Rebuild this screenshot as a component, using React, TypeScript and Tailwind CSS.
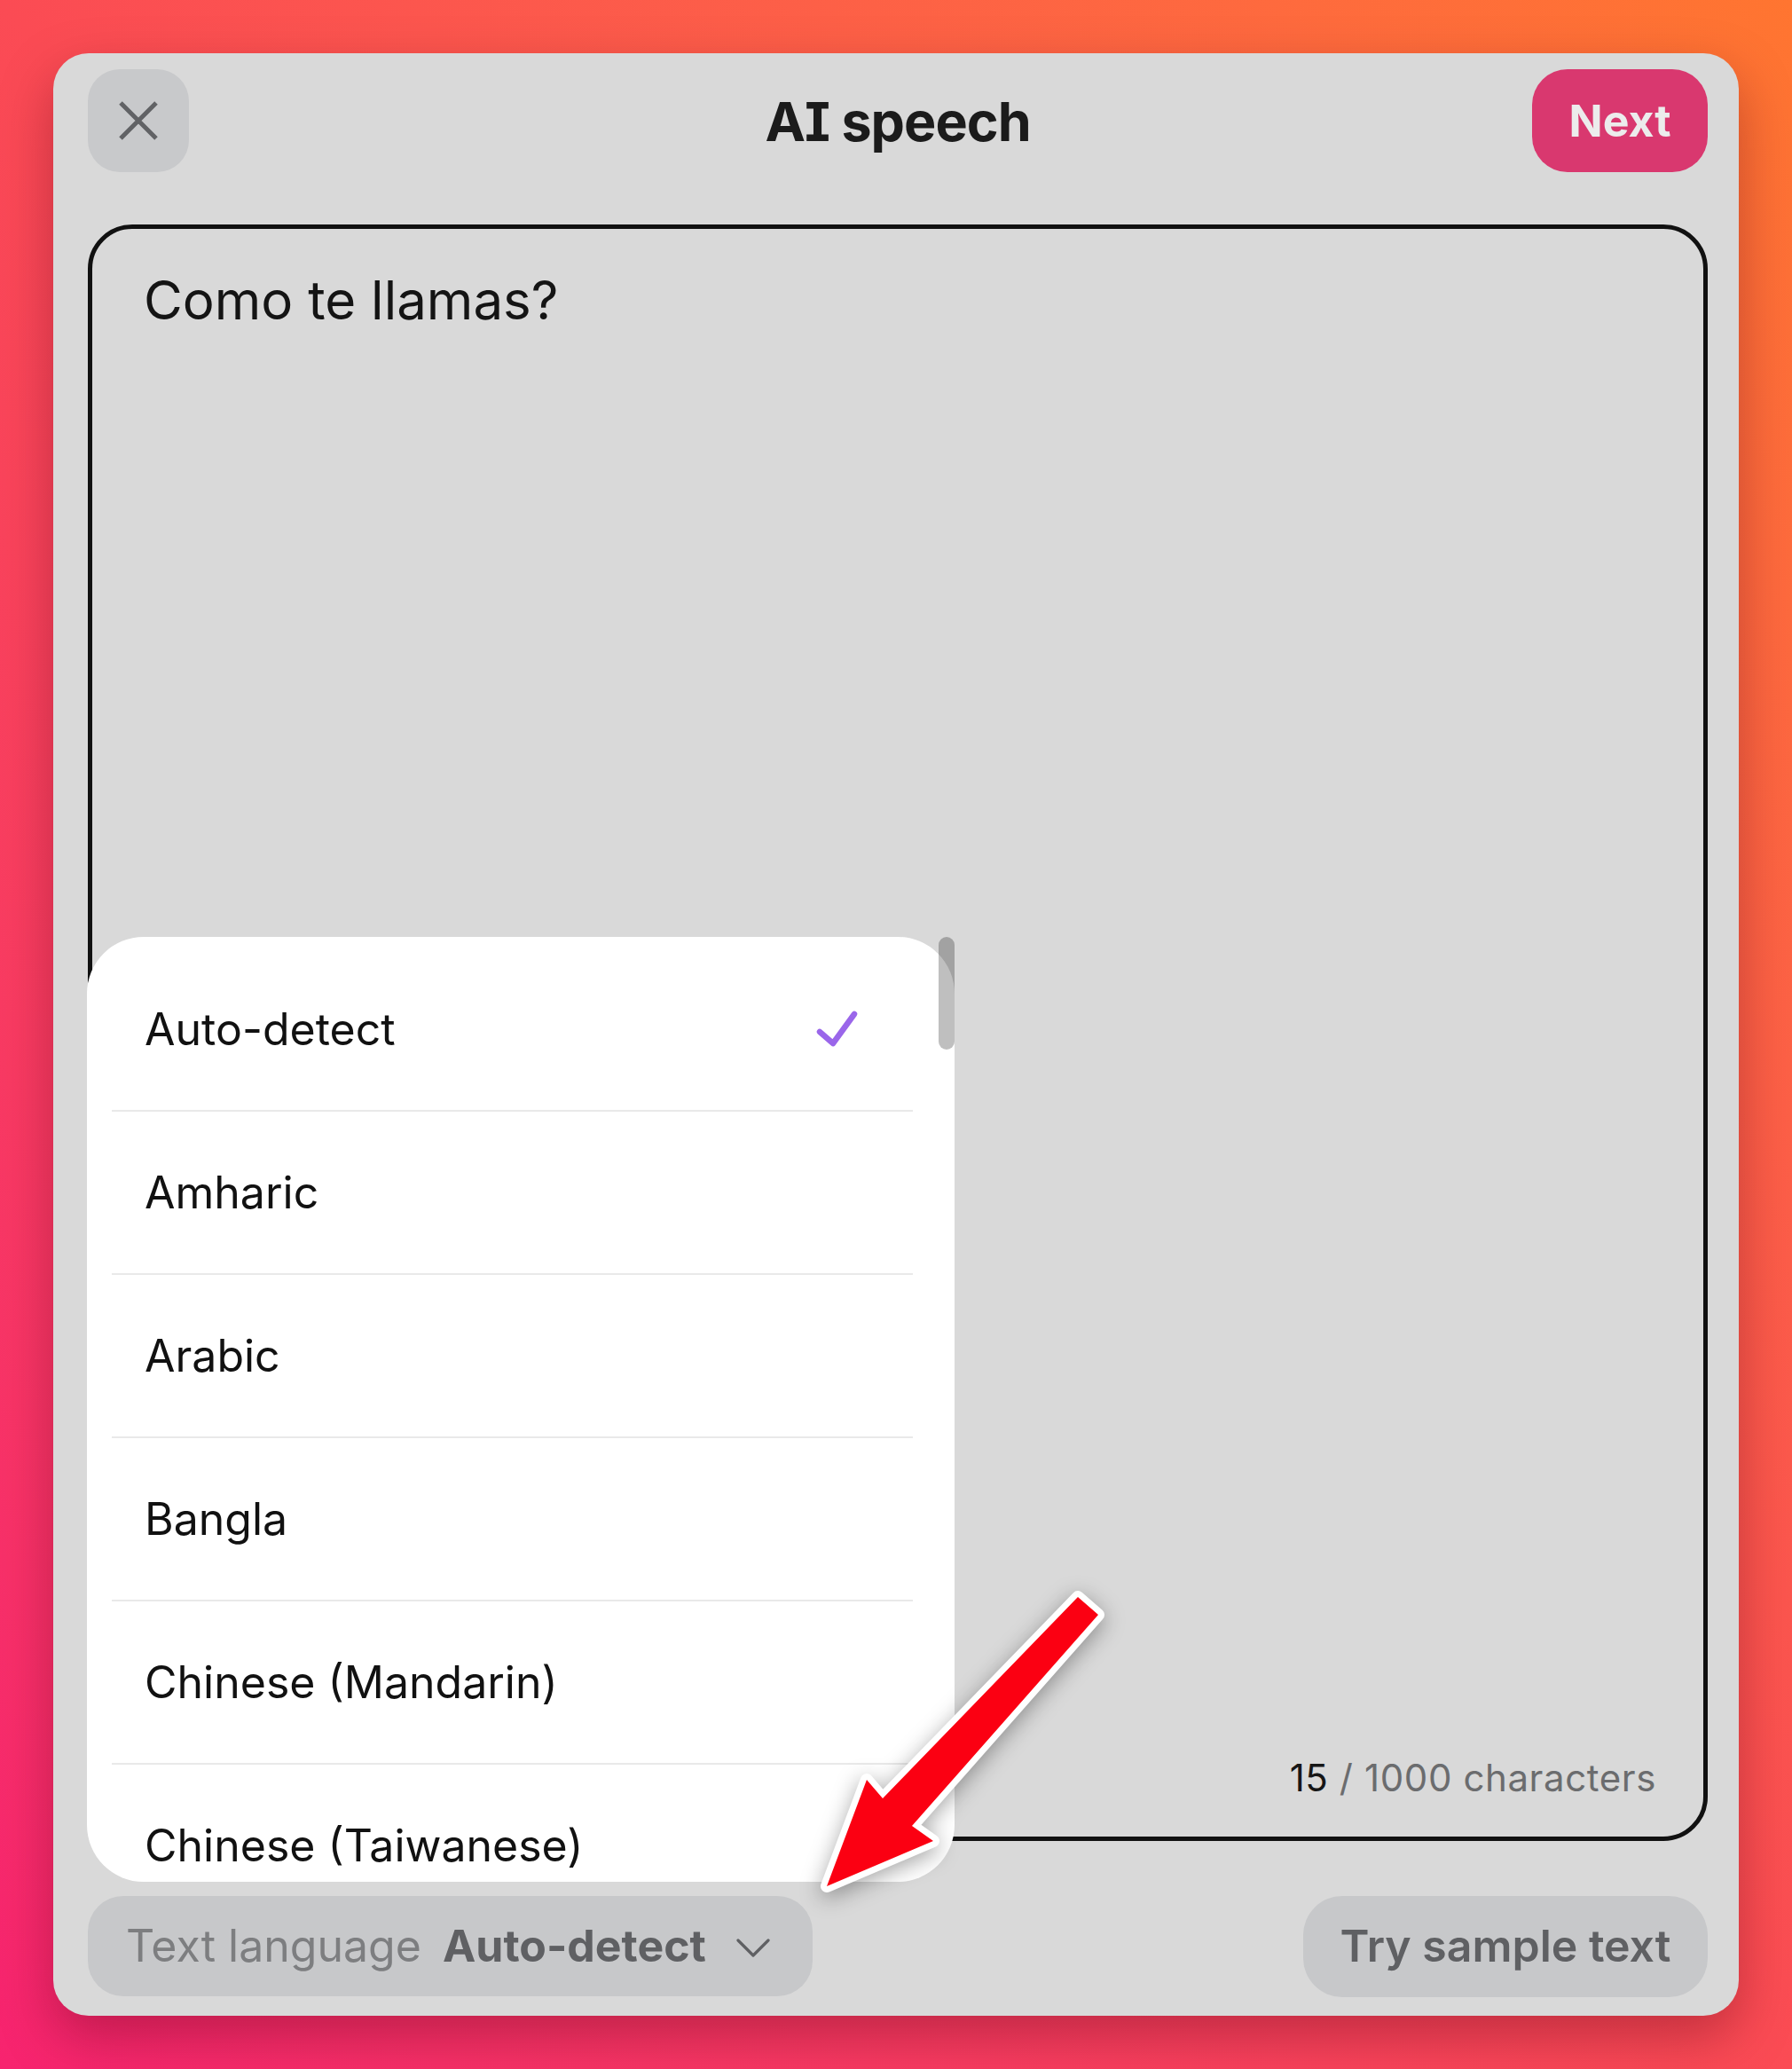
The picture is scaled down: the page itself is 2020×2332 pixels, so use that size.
const LANGUAGES = ['Auto-detect', 'Amharic', 'Arabic', 'Bangla', 'Chinese (Mandarin)', 'Chinese (Taiwanese)']

function CloseIcon() {
  return (
    <svg width="44" height="44" viewBox="0 0 44 44" fill="none">
      <path d="M2 2L42 42M42 2L2 42" stroke="#616265" strokeWidth="5" />
    </svg>
  )
}

function Check() {
  return (
    <svg width="50" height="50" viewBox="0 0 50 50" fill="none">
      <path d="M6 28L21 41L45 8" stroke="#9a66ea" strokeWidth="6.5" strokeLinecap="round" strokeLinejoin="round" />
    </svg>
  )
}

function Chevron() {
  return (
    <svg width="38" height="22" viewBox="0 0 38 22" fill="none">
      <path d="M2 2L19 19L36 2" stroke="#5f6063" strokeWidth="3.2" strokeLinecap="round" strokeLinejoin="round" />
    </svg>
  )
}

function LanguageMenu() {
  return (
    <div className="absolute left-[-1px] bottom-[calc(100%+16px)] w-[978px] h-[1065px]">
      <div className="h-full rounded-[64px] bg-white overflow-hidden pt-[13px]">
        {LANGUAGES.map((lang, i) => (
          <div
            key={lang}
            className="ml-[28px] mr-[47px] h-[184px] shrink-0 border-b-2 border-[#e9e9e9] flex items-center justify-between pl-[37px] pr-[61px]"
          >
            <span className="text-[50px] text-[#111] leading-[60px]">{lang}</span>
            {i === 0 && <Check />}
          </div>
        ))}
      </div>
      <div className="absolute right-0 top-0 w-[18px] h-[127px] rounded-full bg-black/25" />
    </div>
  )
}

export default function App() {
  return (
    <div className="relative w-[2020px] h-[2332px] overflow-hidden bg-linear-to-tr from-[#f7236f] via-[#fb4b54] to-[#ff7530] p-[60px] font-['Inter',sans-serif]">
      <div className="w-[1900px] h-[2212px] rounded-[40px] bg-[#d9d9d9] shadow-[0_24px_60px_rgba(90,0,20,0.35)] flex flex-col pl-[39px] pr-[35px] pt-[18px] pb-[22px]">
        {/* header */}
        <div className="grid grid-cols-[1fr_auto_1fr] items-center h-[116px]">
          <button className="justify-self-start w-[114px] h-[116px] rounded-[36px] bg-[#c8c9cb] flex items-center justify-center">
            <CloseIcon />
          </button>
          <h1 className="text-[61px] font-bold text-[#1b1b1b] leading-none tracking-[-1px] mt-[2px] [font-feature-settings:'cv08']">
            AI speech
          </h1>
          <button className="justify-self-end w-[198px] h-[116px] rounded-[40px] bg-[#d9386f] text-[#ececec] text-[50px] font-bold">
            Next
          </button>
        </div>

        {/* text area */}
        <div className="mt-[59px] h-[1822px] border-[5px] border-[#111] rounded-[50px] flex flex-col pl-[58px] pt-[44px] pr-[53px] pb-[42px]">
          <div className="flex-1 text-[60px] leading-[72px] text-[#141414]">Como te llamas?</div>
          <div className="self-end text-[42px] leading-[48px] tracking-[0.6px] text-[#6b6c6e]">
            <span className="text-[#161616]">15</span> / 1000 characters
          </div>
        </div>

        {/* bottom controls */}
        <div className="mt-[62px] h-[113px] flex items-center justify-between">
          <div className="relative h-[113px] w-[817px] rounded-[40px] bg-[#c7c8ca] flex items-center pl-[43px]">
            <LanguageMenu />
            <span className="text-[50px] text-[#7d7e80]">Text language</span>
            <span className="ml-[24px] text-[50px] font-bold text-[#5f6063]">Auto-detect</span>
            <span className="ml-[34px] mt-[4px]"><Chevron /></span>
          </div>
          <button className="w-[456px] h-[114px] rounded-[44px] bg-[#c7c8ca] text-[50px] font-semibold text-[#5f6063]">
            Try sample text
          </button>
        </div>
      </div>

      {/* annotation arrow */}
      <svg
        className="absolute left-0 top-0 w-[2020px] h-[2332px] pointer-events-none drop-shadow-[0_6px_12px_rgba(0,0,0,0.35)]"
        viewBox="0 0 2020 2332"
      >
        <polygon
          points="1215,1800 1238,1820 1028,2058 1052,2075 932,2126 977,2006 995,2027"
          fill="#fb0012"
          stroke="#ffffff"
          strokeWidth="14"
          strokeLinejoin="round"
          paintOrder="stroke"
        />
      </svg>
    </div>
  )
}
